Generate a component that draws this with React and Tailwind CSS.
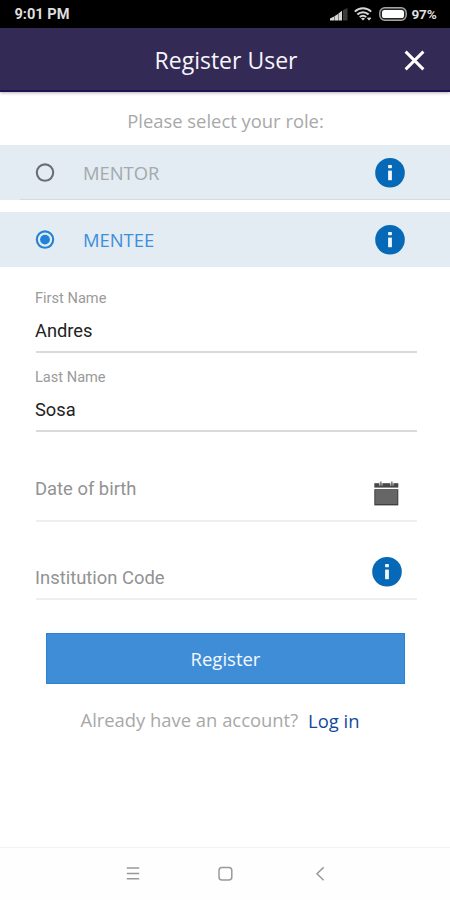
import { useState } from "react";

const roles = ["MENTOR", "MENTEE"];

function InfoIcon() {
  return (
    <svg width="30" height="30" viewBox="0 0 30 30" className="shrink-0">
      <circle cx="15" cy="14.8" r="14.8" fill="#0669b7" />
      <rect x="13.1" y="7" width="3.8" height="3.2" rx="0.6" fill="#f1f7fc" />
      <rect x="13.1" y="12.6" width="3.8" height="9.6" fill="#f1f7fc" />
    </svg>
  );
}

function RadioIcon({ checked }) {
  const color = checked ? "#2382d8" : "#6b6e70";
  return (
    <svg width="20" height="20" viewBox="0 0 20 20" className="shrink-0">
      <circle cx="10" cy="9.6" r="8.2" fill="none" stroke={color} strokeWidth="2.1" />
      {checked && <circle cx="10" cy="9.6" r="4.9" fill={color} />}
    </svg>
  );
}

function CalendarIcon() {
  return (
    <svg width="25" height="25" viewBox="0 0 25 25" className="shrink-0">
      <rect x="0.3" y="2.2" width="24" height="4.4" fill="#484848" />
      <rect x="0.3" y="8.2" width="24" height="16.2" fill="#3f3f3f" />
      <rect x="1.3" y="9" width="22" height="14" fill="#666" />
      <path d="M5.7 0.6v4M8 0.6v4M16.7 0.6v4M19 0.6v4" stroke="#e4e4e4" strokeWidth="0.9" />
      <path d="M6.8 0.6v4M17.8 0.6v4" stroke="#777" strokeWidth="1.3" />
    </svg>
  );
}

function StatusBar() {
  return (
    <div className="h-7 bg-black flex items-center justify-between pl-[14.5px] pr-[13.5px] pt-px font-['Roboto',sans-serif] text-[#dedede]">
      <span className="text-[14.6px] font-bold">9:01 PM</span>
      <div className="flex items-center">
        <svg width="18" height="13" viewBox="0 0 18 13" className="mr-1.5">
          <path d="M0 12.5V10.5L4 8.6V12.5Z M4.4 12.5V8.2L8 6V12.5Z M8.4 12.5V5.5L12 2.8V12.5Z" fill="#d6d6d6" />
          <path d="M13 12.5V2L17.5 0V12.5Z" fill="#3a3a3a" />
        </svg>
        <svg width="18" height="14" viewBox="0 0 18 14" className="mr-[7px]">
          <g fill="none" stroke="#d6d6d6" strokeWidth="2">
            <path d="M0.8 4.6C5.5 0 12.5 0 17.2 4.6" />
            <path d="M3.4 7.5C6.5 4.4 11.5 4.4 14.6 7.5" />
            <path d="M5.8 10.1C7.6 8.3 10.4 8.3 12.2 10.1" />
          </g>
          <path d="M9 13.4L7 11.5Q9 10 11 11.5Z" fill="#d6d6d6" />
          <path d="M13.4 11l1.6 2.2l2-2.2Z" fill="#d6d6d6" stroke="#d6d6d6" strokeWidth="0.8" />
        </svg>
        <svg width="28" height="14" viewBox="0 0 28 14" className="mr-[4.5px]">
          <rect x="0.8" y="0.8" width="26.4" height="12.4" rx="5" fill="#222" stroke="#a5a5a5" strokeWidth="1.4" />
          <rect x="3" y="3" width="22" height="8" rx="2.6" fill="#fff" />
        </svg>
        <span className="text-[13.6px] font-bold tracking-[-0.2px]">97%</span>
      </div>
    </div>
  );
}

function Header() {
  return (
    <header className="h-16 bg-[#342a56] border-b-2 border-[#1d1150] shadow-[0_1px_3px_rgba(0,0,0,0.3)] grid grid-cols-[1fr_auto_1fr] items-center pt-[2px]">
      <h1 className="col-start-2 pl-0.5 text-[23px] text-[#f6f5fa] whitespace-nowrap">Register User</h1>
      <button className="justify-self-end mr-[25px]">
        <svg width="21" height="21" viewBox="0 0 21 21" className="block">
          <path d="M1.6 1.6L19.4 19.4M19.4 1.6L1.6 19.4" stroke="#fff" strokeWidth="2.9" />
        </svg>
      </button>
    </header>
  );
}

function RoleRow({ label, checked, onSelect }) {
  return (
    <div onClick={onSelect} className="h-[55px] bg-[#e2ecf2] flex items-center pl-[35px] pr-[45px]">
      <RadioIcon checked={checked} />
      <span className={`ml-7 flex-1 text-[18.4px] ${checked ? "text-[#3d8edb]" : "text-[#a3a9ac]"}`}>
        {label}
      </span>
      <InfoIcon />
    </div>
  );
}

function FilledField({ label, value }) {
  return (
    <div className="h-[79px] flex flex-col">
      <label className="text-[14.6px] leading-5 text-[#9a9a9a] -ml-px">{label}</label>
      <div className="mt-[11px] h-6 text-[18.3px] leading-6 text-[#222] -ml-px">{value}</div>
      <div className="mt-2 h-0.5 bg-[#dadada]"></div>
    </div>
  );
}

export default function App() {
  const [role, setRole] = useState("MENTEE");

  return (
    <div className="w-[450px] h-[900px] bg-white flex flex-col overflow-hidden font-['Open_Sans',sans-serif]">
      <StatusBar />
      <Header />

      <p className="h-[53px] pt-[5px] pl-px leading-[48px] text-center text-[18.4px] text-[#a8a8a8]">
        Please select your role:
      </p>

      <div className="flex flex-col">
        {roles.map((r, i) => (
          <div key={r}>
            <RoleRow label={r} checked={role === r} onSelect={() => setRole(r)} />
            {i < roles.length - 1 && (
              <div className="-mt-px h-[13px]">
                <div className="ml-5 h-px bg-[#d3dce1]"></div>
              </div>
            )}
          </div>
        ))}
      </div>

      <form className="pt-[21px] pl-9 pr-[33px] font-['Roboto',sans-serif]">
        <FilledField label="First Name" value="Andres" />
        <FilledField label="Last Name" value="Sosa" />

        <div className="mt-[35px] h-[41px] border-b-2 border-[#eeeeee] flex items-start justify-between pr-[18px]">
          <span className="text-[18.4px] leading-6 -mt-1 -ml-px text-[#929292]">Date of birth</span>
          <CalendarIcon />
        </div>
        <div className="mt-[35px] h-[43px] border-b-2 border-[#eeeeee] flex items-start justify-between pr-[15px]">
          <span className="text-[18.4px] leading-6 mt-[9px] -ml-px text-[#929292]">Institution Code</span>
          <InfoIcon />
        </div>
      </form>

      <button className="mt-[33px] ml-[46px] w-[359px] h-[51px] shrink-0 bg-[#3f8dd7] border border-[#2883d2] text-[18.5px] text-[#f4f9fd]">
        Register
      </button>

      <div className="mt-[22px] pl-[80.5px] flex text-[18.4px] leading-7 whitespace-nowrap">
        <span className="text-[#a8a8a8]">Already have an account?</span>
        <a className="ml-2.5 pt-px font-medium text-[#0f4a9c]">Log in</a>
      </div>

      <nav className="mt-auto h-[53px] border-t border-[#f3f3f3] bg-[#fefefe] flex items-center text-[#999]">
        <svg width="14" height="16" viewBox="0 0 14 16" className="ml-[126px]">
          <path d="M0.8 2h12.4M0.8 7.5h12.4M0.8 12.8h12.4" stroke="currentColor" strokeWidth="1.6" />
        </svg>
        <svg width="16" height="16" viewBox="0 0 16 16" className="ml-[77px]">
          <rect x="2" y="1.6" width="12.8" height="12.4" rx="3" fill="none" stroke="currentColor" strokeWidth="1.5" />
        </svg>
        <svg width="10" height="16" viewBox="0 0 10 16" className="ml-[82px]">
          <path d="M8.6 1.4L2 7.8l6.6 6.4" fill="none" stroke="currentColor" strokeWidth="1.5" />
        </svg>
      </nav>
    </div>
  );
}
